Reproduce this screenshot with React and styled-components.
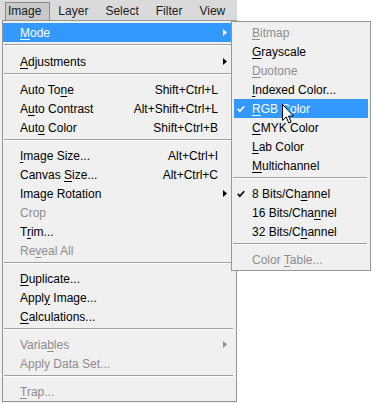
import styled, { createGlobalStyle } from "styled-components";

const GlobalStyle = createGlobalStyle`
  body {
    margin: 0;
    background: #fff;
    font-family: "Liberation Sans", Arial, sans-serif;
    font-size: 12px;
  }
`

const Window = styled.div`
  position: relative;
  width: 237px;
  height: 403px;
  background: #f0f0f0;
`

const MenuBar = styled.div`
  display: flex;
  align-items: flex-end;
  height: 20px;
  padding-left: 5px;
  background: #dadada;
  box-sizing: border-box;
`

const Title = styled.div`
  height: 18px;
  line-height: 17px;
  padding: 0 8px 0 2px;
  margin-right: 5px;
  color: #1a1a1a;
  border: 1px solid ${props => props.active ? "#8a8a8a" : "transparent"};
  border-bottom: none;
  background: ${props => props.active ? "#c9c9c9" : "transparent"};
  box-sizing: border-box;
`

const Menu = styled.div`
  position: absolute;
  top: 20px;
  left: 2px;
  width: 235px;
  padding: 2px 0 0;
  background: #f0f0f0;
  border: 1px solid #979797;
  box-sizing: border-box;
`

const SubMenu = styled.div`
  position: absolute;
  top: 21px;
  left: 231px;
  width: 140px;
  padding: 1px 0;
  background: #f0f0f0;
  border: 1px solid #979797;
  box-sizing: border-box;
  z-index: 2;
`

const Row = styled.div`
  display: flex;
  align-items: center;
  height: 19px;
  margin: ${props => props.inset ? "0 2px" : "0"};
  background: ${props => props.hot ? "#3399ff" : "transparent"};
  color: ${props => props.hot ? "#fff" : props.disabled ? "#8d8d8d" : "#000"};
  white-space: nowrap;
`

const Label = styled.span`
  flex: 1;
  padding-left: ${props => props.indent}px;
`

const Shortcut = styled.span`
  text-align: right;
`

const ArrowCell = styled.span`
  display: flex;
  width: 18px;
  padding-left: 5px;
  box-sizing: border-box;
`

const CheckCell = styled.span`
  display: flex;
  width: 18px;
  padding-left: 3px;
  box-sizing: border-box;
`

const Key = styled.u`
  text-decoration: underline;
  text-underline-offset: 2px;
`

const Separator = styled.div`
  height: ${props => props.tall ? 10 : 9}px;
  padding-top: 2px;
  margin: 0 3px 0 1px;
  box-sizing: border-box;

  &::before {
    content: "";
    display: block;
    border-top: 1px solid #a0a0a0;
    border-bottom: 1px solid #fff;
  }
`

const Pointer = styled.svg`
  position: absolute;
  left: 282px;
  top: 104px;
  z-index: 3;
`

// "&" marks the access key letter
function Mnemonic({ text }) {
  const i = text.indexOf("&");
  if (i < 0) return text;
  return (
    <>
      {text.slice(0, i)}
      <Key>{text[i + 1]}</Key>
      {text.slice(i + 2)}
    </>
  );
}

const Arrow = ({ color }) => (
  <svg width="4" height="7" viewBox="0 0 4 7">
    <path d="M0 0 L4 3.5 L0 7 Z" fill={color} />
  </svg>
);

const Check = ({ color }) => (
  <svg width="8" height="8" viewBox="0 0 8 8">
    <polyline points="0.8,3.8 2.8,6.2 7.2,1.2" fill="none" stroke={color} strokeWidth="1.7" />
  </svg>
);

const mainItems = [
  { label: "&Mode", sub: true, hot: true },
  { sep: true, tall: true },
  { label: "&Adjustments", sub: true },
  { sep: true },
  { label: "Auto To&ne", keys: "Shift+Ctrl+L" },
  { label: "A&uto Contrast", keys: "Alt+Shift+Ctrl+L" },
  { label: "Aut&o Color", keys: "Shift+Ctrl+B" },
  { sep: true },
  { label: "&Image Size...", keys: "Alt+Ctrl+I" },
  { label: "Canvas &Size...", keys: "Alt+Ctrl+C" },
  { label: "Image Rotation", sub: true },
  { label: "Crop", disabled: true },
  { label: "T&rim..." },
  { label: "Re&veal All", disabled: true },
  { sep: true },
  { label: "&Duplicate..." },
  { label: "Appl&y Image..." },
  { label: "&Calculations..." },
  { sep: true },
  { label: "Varia&bles", sub: true, disabled: true },
  { label: "Apply Data Set...", disabled: true },
  { sep: true },
  { label: "&Trap...", disabled: true },
];

const modeItems = [
  { label: "&Bitmap", disabled: true },
  { label: "&Grayscale" },
  { label: "&Duotone", disabled: true },
  { label: "&Indexed Color..." },
  { label: "&RGB Color", checked: true, hot: true },
  { label: "&CMYK Color" },
  { label: "&Lab Color" },
  { label: "&Multichannel" },
  { sep: true },
  { label: "8 Bits/Ch&annel", checked: true },
  { label: "16 Bits/Cha&nnel" },
  { label: "32 Bits/C&hannel" },
  { sep: true },
  { label: "Color &Table...", disabled: true },
];

const arrowColor = item => item.hot ? "#fff" : item.disabled ? "#8d8d8d" : "#000";

function App() {
  return (
    <Window>
      <GlobalStyle />
      <MenuBar>
        <Title active>Image</Title>
        <Title>Layer</Title>
        <Title>Select</Title>
        <Title>Filter</Title>
        <Title>View</Title>
      </MenuBar>

      <Menu>
        {mainItems.map((item, i) =>
          item.sep ? <Separator key={i} tall={item.tall} /> : (
            <Row key={i} hot={item.hot} disabled={item.disabled}>
              <Label indent={17}><Mnemonic text={item.label} /></Label>
              {item.keys && <Shortcut>{item.keys}</Shortcut>}
              <ArrowCell>{item.sub && <Arrow color={arrowColor(item)} />}</ArrowCell>
            </Row>
          )
        )}
      </Menu>

      <SubMenu>
        {modeItems.map((item, i) =>
          item.sep ? <Separator key={i} /> : (
            <Row key={i} inset hot={item.hot} disabled={item.disabled}>
              <CheckCell>{item.checked && <Check color={item.hot ? "#fff" : "#000"} />}</CheckCell>
              <Label indent={0}><Mnemonic text={item.label} /></Label>
            </Row>
          )
        )}
      </SubMenu>

      <Pointer width="13" height="21" viewBox="0 0 13 21">
        <path d="M0.5 0.5 L0.5 16.5 L4.2 12.9 L6.8 19 L9.2 18 L6.6 12 L11.5 12 Z" fill="#fff" stroke="#000" strokeWidth="1" strokeLinejoin="miter" />
      </Pointer>
    </Window>
  );
}

export default App;
